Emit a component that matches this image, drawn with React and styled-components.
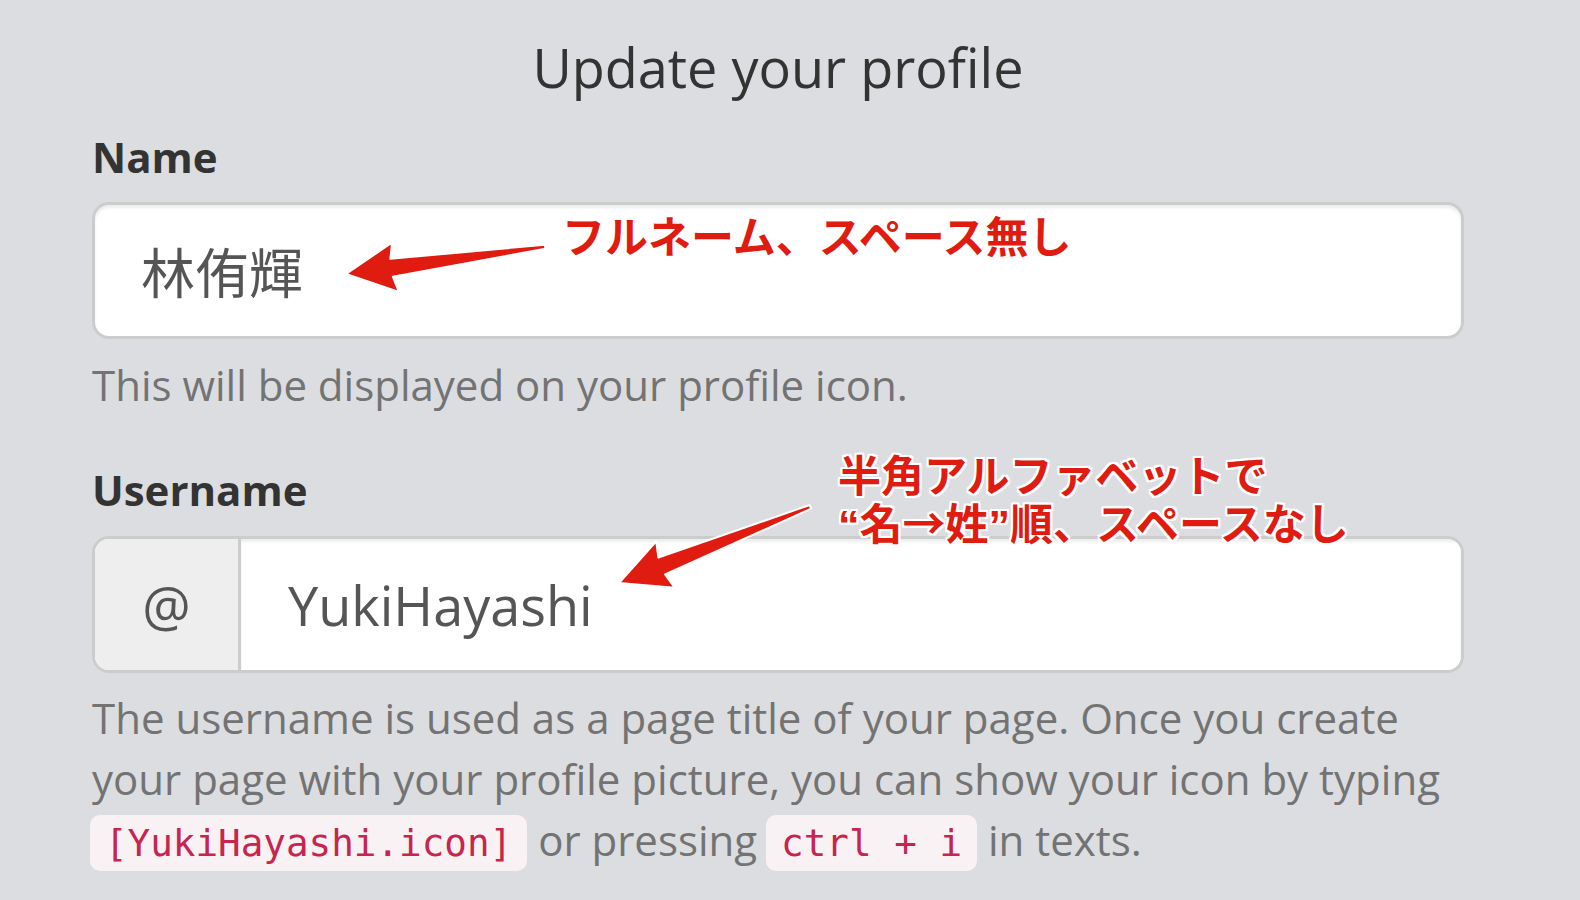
import React from "react";
import styled, { createGlobalStyle } from "styled-components";

const Global = createGlobalStyle`
  html, body { margin: 0; padding: 0; }
  body {
    background: #dcdde1;
    font-family: "Open Sans", "Noto Sans CJK JP", sans-serif;
    color: #333;
  }
`;

const Page = styled.div`
  position: relative;
  box-sizing: border-box;
  width: 1580px;
  min-height: 900px;
  padding: 35px 116px 0 92px;
  overflow: hidden;
`;

const Title = styled.h1`
  margin: 0;
  font-size: 54px;
  line-height: 64px;
  font-weight: 400;
  text-align: center;
  color: #333;
`;

const FormGroup = styled.div`
  display: flex;
  flex-direction: column;
  margin-top: ${(p) => p.$mt}px;
`;

const Label = styled.label`
  font-size: 42px;
  line-height: 48px;
  font-weight: 700;
  color: #333;
  margin-bottom: ${(p) => p.$mb}px;
`;

const Field = styled.input`
  box-sizing: border-box;
  width: 100%;
  height: 137px;
  margin: 0;
  padding: 0 46px;
  border: 3px solid #cccccc;
  border-radius: 17px;
  background: #fff;
  box-shadow: inset 0 3px 3px rgba(0, 0, 0, 0.075);
  font-family: "Open Sans", "Noto Sans CJK JP", sans-serif;
  font-size: 54px;
  color: #555;
  outline: none;
`;

const InputGroup = styled.div`
  display: flex;
  height: 137px;
  box-sizing: border-box;
  border: 3px solid #cccccc;
  border-radius: 17px;
  overflow: hidden;
  background: #fff;
`;

const Addon = styled.span`
  flex: 0 0 143px;
  display: flex;
  align-items: center;
  justify-content: center;
  background: #eeeeee;
  border-right: 3px solid #cccccc;
  font-size: 54px;
  color: #555;
`;

const GroupField = styled(Field)`
  flex: 1;
  height: auto;
  border: none;
  border-radius: 0;
  padding: 0 47px;
`;

const Help = styled.p`
  margin: ${(p) => p.$mt}px 0 0;
  font-size: 42px;
  line-height: ${(p) => p.$lh}px;
  color: #737373;
`;

const Code = styled.code`
  font-family: "DejaVu Sans Mono", "Liberation Mono", monospace;
  font-size: 37.6px;
  padding: 6px 15px;
  margin-left: -2px;
  border-radius: 10px;
  background: #f9f2f4;
  color: #c7254e;
`;

const Note = styled.div`
  position: absolute;
  top: ${(p) => p.$top}px;
  left: ${(p) => p.$left}px;
  font-family: "Noto Sans CJK JP", sans-serif;
  font-weight: 700;
  font-size: 43px;
  line-height: 48px;
  color: #e01b10;
  white-space: nowrap;
  text-shadow:
    2px 0 0 #fff, -2px 0 0 #fff, 0 2px 0 #fff, 0 -2px 0 #fff,
    2px 2px 0 #fff, -2px -2px 0 #fff, 2px -2px 0 #fff, -2px 2px 0 #fff,
    0 0 3px #fff;
`;

const Quote = styled.span`
  font-family: "Liberation Sans", sans-serif;
`;

const Overlay = styled.svg`
  position: absolute;
  top: 0;
  left: 0;
  pointer-events: none;
`;

const arrowPoints = (L) =>
  `0,0 50,-25 46,-9 ${L},-2 ${L},2 46,9 50,25`;

const Arrow = ({ x, y, len, deg }) => (
  <g transform={`translate(${x} ${y}) rotate(${deg})`}>
    <polygon
      points={arrowPoints(len)}
      fill="#e01b10"
      stroke="#ffffff"
      strokeWidth="2"
      strokeLinejoin="round"
    />
  </g>
);

export default function App() {
  return (
    <>
      <Global />
      <Page>
        <Title>Update your profile</Title>
        <FormGroup $mt={34}>
          <Label $mb={21}>Name</Label>
          <Field defaultValue="林侑輝" readOnly />
          <Help $mt={16} $lh={60}>
            This will be displayed on your profile icon.
          </Help>
        </FormGroup>
        <FormGroup $mt={51}>
          <Label $mb={22}>Username</Label>
          <InputGroup>
            <Addon>@</Addon>
            <GroupField defaultValue="YukiHayashi" readOnly />
          </InputGroup>
          <Help $mt={14} $lh={61}>
            The username is used as a page title of your page. Once you create
            your page with your profile picture, you can show your icon by
            typing <Code>[YukiHayashi.icon]</Code> or pressing{" "}
            <Code>ctrl + i</Code> in texts.
          </Help>
        </FormGroup>

        <Overlay width="1580" height="900" viewBox="0 0 1580 900">
          <Arrow x={346} y={274} len={201} deg={-7.8} />
          <Arrow x={619} y={583} len={206} deg={-21.7} />
        </Overlay>

        <Note $top={210} $left={562}>フルネーム、スペース無し</Note>
        <Note $top={449} $left={838}>
          半角アルファベットで
          <br />
          <Quote>“</Quote>名→姓<Quote>”</Quote>順、スペースなし
        </Note>
      </Page>
    </>
  );
}
